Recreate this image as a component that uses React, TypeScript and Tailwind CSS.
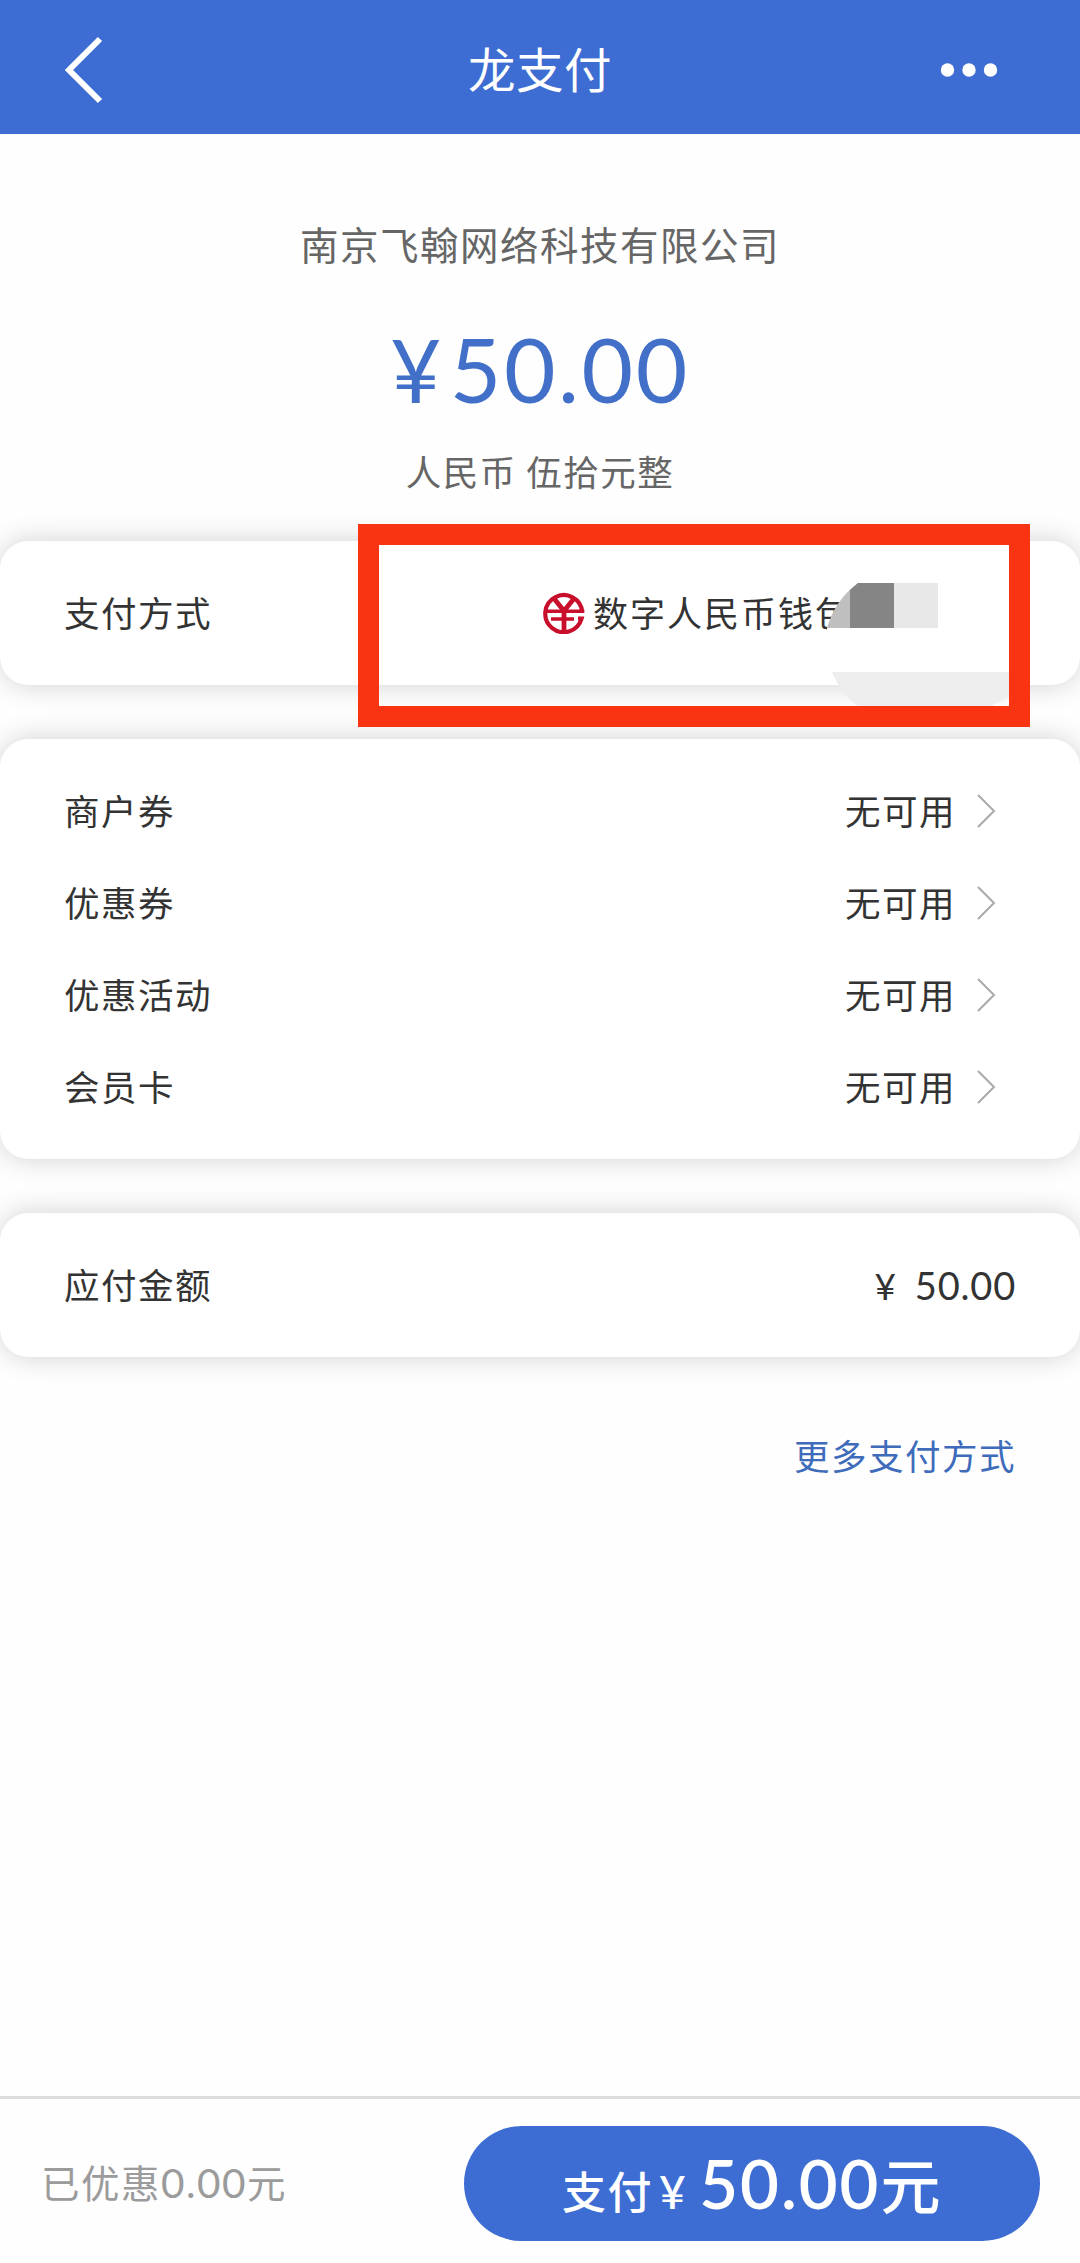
import type { ReactNode } from 'react';

const coupons = [
  { label: '商户券', value: '无可用' },
  { label: '优惠券', value: '无可用' },
  { label: '优惠活动', value: '无可用' },
  { label: '会员卡', value: '无可用' },
];

function Header() {
  return (
    <header className="grid h-[134px] grid-cols-3 items-center bg-[#3d6dd2] px-16 pt-1.5 text-white">
      <button className="justify-self-start" aria-label="返回">
        <svg width="40" height="68" viewBox="0 0 40 68" fill="none">
          <path d="M36 3 L5 34 L36 65" stroke="currentColor" strokeWidth="6" />
        </svg>
      </button>
      <h1 className="justify-self-center pb-[4px] text-[47.5px] leading-none tracking-[0.5px] whitespace-nowrap">龙支付</h1>
      <button className="justify-self-end pr-[18px]" aria-label="更多">
        <svg width="58" height="16" viewBox="0 0 58 16" fill="currentColor">
          <circle cx="7.5" cy="8" r="6.7" />
          <circle cx="29" cy="8" r="6.7" />
          <circle cx="50.5" cy="8" r="6.7" />
        </svg>
      </button>
    </header>
  );
}

function Card({ className, children }: { className: string; children: ReactNode }) {
  return (
    <section className={`rounded-[28px] bg-white px-16 shadow-[0_0_28px_rgba(0,0,0,0.18)] ${className}`}>
      {children}
    </section>
  );
}

function WalletIcon() {
  return (
    <svg className="shrink-0" width="42" height="42" viewBox="0 0 42 42" fill="none" stroke="#c8102c">
      <path d="M39.2 20 A18.5 18.5 0 1 0 38.6 26.5 H35" strokeWidth="4.2" />
      <path d="M11 6.5 L21 19 L31 6.5 M21 17 V39" strokeWidth="4.8" />
      <path d="M3 19.2 H41.3 M8 27 H31" strokeWidth="3.6" />
    </svg>
  );
}

export default function App() {
  return (
    <div className="flex h-[2263px] w-[1080px] flex-col overflow-hidden bg-[#fefefe] font-['Noto_Sans_CJK_SC',sans-serif] text-[35.5px] leading-none tracking-[1.5px] text-[#333]">
      <Header />

      <div className="flex h-[407px] flex-col items-center text-[#666]">
        <p className="mt-[90px] text-[38.5px]">南京飞翰网络科技有限公司</p>
        <p className="mt-[61px] flex items-baseline gap-1.5 font-['Lato',sans-serif] text-[89px] tracking-[2.5px] text-[#4270c9]">
          <span className="text-[88px]">¥</span>
          <span>50.00</span>
        </p>
        <p className="mt-[40px]">人民币 伍拾元整</p>
      </div>

      <div className="flex flex-col gap-[54px]">
        <Card className="relative flex h-36 items-center">
          <span className="pb-[3px]">支付方式</span>
          <div className="ml-[331px] flex items-center gap-2 whitespace-nowrap">
            <WalletIcon />
            <span className="pb-[3px] text-[35px] tracking-[2px]">数字人民币钱包</span>
          </div>

          {/* redacted wallet number */}
          <svg className="absolute top-[42px] left-[827px]" width="182" height="123" viewBox="0 0 182 123">
            <path d="M22 0 H40 V53 H0 V45 Z" fill="#fff" />
            <path d="M0 45 Q8 17 31 0 H40 V45 Z" fill="#bfbfbf" />
            <path d="M23 7 L31 0 H67 V45 H23 Z" fill="#858585" />
            <path d="M67 0 H111 V45 H67 Z" fill="#e8e8e8" />
            <path d="M5 89 H182 V114 L164 123 H31 Q13 110 5 89 Z" fill="#eee" />
          </svg>
          <div className="absolute top-[-17px] left-[358px] h-[203px] w-[672px] border-[21px] border-[#f93412]" />
        </Card>

        <Card className="h-[420px] py-[26px]">
          {coupons.map((item) => (
            <div key={item.label} className="flex h-[92px] items-center justify-between">
              <span className="pb-[3px]">{item.label}</span>
              <span className="flex items-center gap-[21px] pr-5">
                <span className="pb-[3px]">{item.value}</span>
                <svg width="19" height="34" viewBox="0 0 19 34" fill="none">
                  <path d="M1 1 L17 17 L1 33" stroke="#aaa" strokeWidth="2" />
                </svg>
              </span>
            </div>
          ))}
        </Card>

        <Card className="flex h-36 items-center justify-between">
          <span className="pb-[3px]">应付金额</span>
          <span className="flex items-baseline gap-[18px] pb-px font-['Lato',sans-serif] text-[38px] tracking-[0.8px]">
            <span className="text-[37px]">¥</span>
            <span>50.00</span>
          </span>
        </Card>
      </div>

      <a href="#" className="mt-[80px] mr-[64px] self-end text-[#3f6cba]">
        更多支付方式
      </a>

      <footer className="mt-auto flex h-[167px] items-center justify-between border-t-[3px] border-[#dcdcdc] pt-[5px] pr-10 pl-[41px]">
        <span className="pb-[2px] text-[38.5px] tracking-[1.5px] text-[#9b9b9b]">
          已优惠<span className="font-['Lato',sans-serif] text-[40.5px]">0.00</span>元
        </span>
        <button className="flex h-[115px] w-[576px] items-baseline justify-center rounded-full bg-[#3d6dd2] pt-[24px] font-medium text-white">
          <span className="text-[44px]">支付</span>
          <span className="ml-1.5 font-['Lato',sans-serif] text-[46px]">¥</span>
          <span className="ml-3 font-['Lato',sans-serif] text-[67px] font-semibold tracking-[2px]">50.00</span>
          <span className="text-[60px]">元</span>
        </button>
      </footer>
    </div>
  );
}
